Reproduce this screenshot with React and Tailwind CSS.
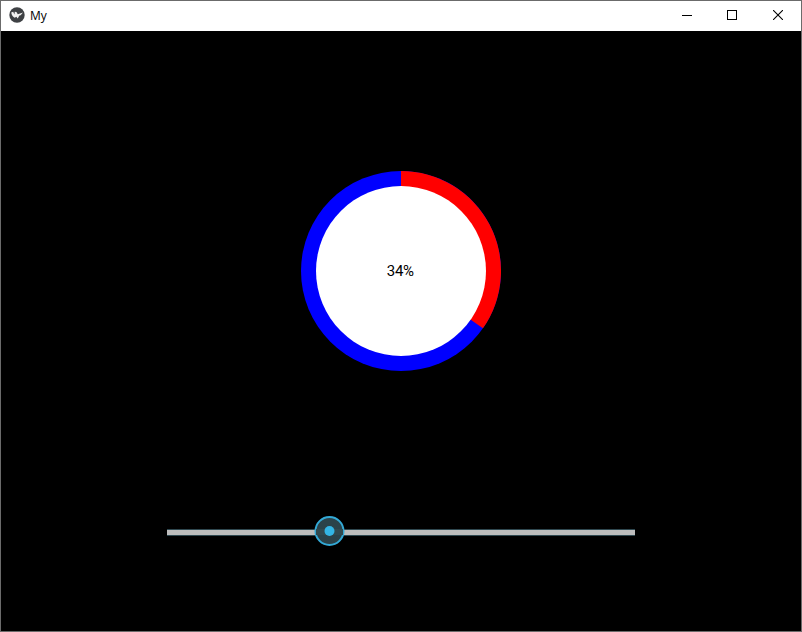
import React from "react";

function AppIcon() {
  return (
    <svg className="h-4 w-4 shrink-0" viewBox="0 0 16 16" aria-hidden="true">
      <circle cx="8" cy="8" r="7.7" fill="#3e4144" />
      <path
        d="M2.2 5.4 4.2 4.8 5.4 7.6 5.8 4.8 7.4 5 8.8 7.2 14 5.6 11.6 8.2 10.4 8.5 8.7 11.4 7.3 9.8 5.8 10.8Q3.1 9.6 2.2 5.4Z"
        fill="#f2f2f2"
      />
    </svg>
  );
}

function TitleBar() {
  return (
    <header className="flex h-[30px] shrink-0 items-start bg-white pl-2">
      <div className="flex h-[28px] grow items-center gap-[5px]">
        <AppIcon />
        <span className="pt-0.5 font-['Open_Sans','Noto_Sans',sans-serif] text-[12px] leading-4 text-black">My</span>
      </div>
      <button className="flex h-[28px] w-[45px] items-center justify-center" aria-label="Minimize">
        <svg className="h-[10px] w-[10px]" viewBox="0 0 10 10" shapeRendering="crispEdges">
          <path d="M0 5.5H10" stroke="#000" />
        </svg>
      </button>
      <button className="flex h-[28px] w-[46px] items-center justify-center" aria-label="Maximize">
        <svg className="h-[10px] w-[10px]" viewBox="0 0 10 10" shapeRendering="crispEdges">
          <path d="M.5 .5H9.5V9.5H.5Z" fill="none" stroke="#000" />
        </svg>
      </button>
      <button className="flex h-[28px] w-[46px] items-center justify-center" aria-label="Close">
        <svg className="h-[10px] w-[10px]" viewBox="0 0 10 10">
          <path d="M0 0 10 10M10 0 0 10" stroke="#000" strokeWidth="1.1" />
        </svg>
      </button>
    </header>
  );
}

function ProgressRing() {
  return (
    <div className="grid h-[200px] w-[200px] place-items-center">
      <svg className="col-start-1 row-start-1 h-[200px] w-[200px]" viewBox="-100 -100 200 200">
        <circle r="100" fill="#0000ff" />
        <path d="M0 0V-100A100 100 0 0 1 81.92 57.36Z" fill="#ff0000" />
        <circle r="85" fill="#fff" />
      </svg>
      <span className="z-10 col-start-1 row-start-1 pr-[1.5px] font-[Roboto,sans-serif] text-[15px] leading-[18px] tracking-[-0.3px] text-black">
        34%
      </span>
    </div>
  );
}

function Slider() {
  return (
    <svg className="h-8 w-[468px]" viewBox="0 0 468 32" role="img" aria-label="Progress">
      <rect y="14" width="468" height="7" fill="#2f4850" />
      <rect y="15" width="468" height="5" fill="#bdbdbd" />
      <circle cx="162.5" cy="16" r="14" fill="#2b4249" stroke="#33a9d6" strokeWidth="2" />
      <rect x="149" y="14" width="27" height="6" fill="#30494f" />
      <circle cx="162.5" cy="16" r="5" fill="#33b5e5" />
    </svg>
  );
}

export default function App() {
  return (
    <div className="flex h-[632px] w-[802px] flex-col border border-[#6b6b6b] bg-black">
      <TitleBar />
      <main className="flex grow flex-col items-center bg-black pt-[140px]">
        <ProgressRing />
        <div className="mt-36 flex">
          <Slider />
        </div>
      </main>
    </div>
  );
}
